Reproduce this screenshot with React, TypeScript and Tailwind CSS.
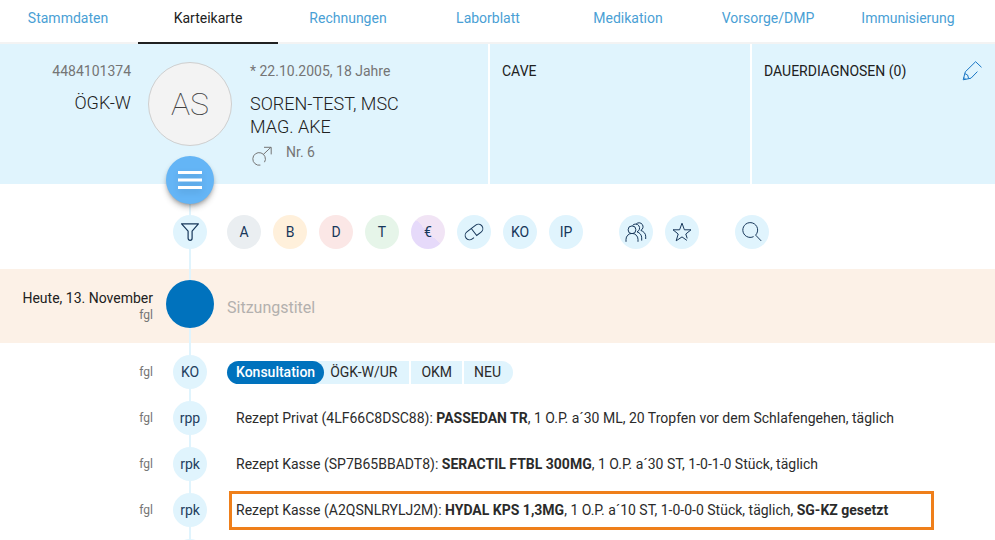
import React from "react";
import clsx from "clsx";

const tabs = [
  "Stammdaten",
  "Karteikarte",
  "Rechnungen",
  "Laborblatt",
  "Medikation",
  "Vorsorge/DMP",
  "Immunisierung",
];

const letterFilters = [
  { label: "A", className: "bg-[#eaeef1]" },
  { label: "B", className: "bg-[#fff0db]" },
  { label: "D", className: "bg-[#fbe7e6]" },
  { label: "T", className: "bg-[#e6f5e9]" },
  {
    label: "€",
    className: "bg-[linear-gradient(45deg,#e6dafa_50%,#f1e4f5_50%)]",
  },
];

const prescriptions = [
  {
    kind: "rpp",
    title: "Rezept Privat (4LF66C8DSC88): ",
    drug: "PASSEDAN TR",
    dosage: ", 1 O.P. a´30 ML, 20 Tropfen vor dem Schlafengehen, täglich",
  },
  {
    kind: "rpk",
    title: "Rezept Kasse (SP7B65BBADT8): ",
    drug: "SERACTIL FTBL 300MG",
    dosage: ", 1 O.P. a´30 ST, 1-0-1-0 Stück, täglich",
  },
  {
    kind: "rpk",
    title: "Rezept Kasse (A2QSNLRYLJ2M): ",
    drug: "HYDAL KPS 1,3MG",
    dosage: ", 1 O.P. a´10 ST, 1-0-0-0 Stück, täglich, ",
    note: "SG-KZ gesetzt",
    highlighted: true,
  },
];

interface IconProps {
  children: React.ReactNode;
  className?: string;
}

const Icon = ({ children, className }: IconProps) => (
  <svg
    viewBox="0 0 20 20"
    className={clsx("w-5 h-5", className)}
    fill="none"
    stroke="currentColor"
    strokeWidth="1"
    aria-hidden="true"
  >
    {children}
  </svg>
);

const FunnelIcon = () => (
  <Icon>
    <path
      d="M1.6 1.8H18.4L12.1 9.2V16.3a2 2 0 0 1-4 0V9.2Z"
      strokeWidth="1.2"
      strokeLinejoin="round"
    />
  </Icon>
);

const PillIcon = () => (
  <Icon>
    <g transform="rotate(-38 10 10)">
      <path d="M6.6 14.4H4.4a4.4 4.4 0 0 1 0-8.8H15.6a4.4 4.4 0 0 1 0 8.8H10V5.6" />
    </g>
  </Icon>
);

const PeopleIcon = () => (
  <svg
    viewBox="0 0 22 20"
    className="w-[22px] h-5"
    fill="none"
    stroke="currentColor"
    aria-hidden="true"
  >
    <circle cx="7" cy="7.8" r="3.9" />
    <path d="M1 19.8V17.4a6 6 0 0 1 12 0v2.4" />
    <path d="M7.6 3.4a4 4 0 1 1 4.4 6.4c2.9 1 4.7 3.2 4.7 6v2.8" />
    <path d="M11.2 2a4 4 0 1 1 4.6 6.4c2.8 1 4.9 3.2 4.9 5.8v2.8" />
  </svg>
);

const StarIcon = () => (
  <Icon>
    <path d="M14.9 18.4 10 14.9 4.2 18.8 6.2 12 1 7.8H7.6L10 1.2 12.4 7.8H19L13.8 12 15.2 16.4" />
  </Icon>
);

const SearchIcon = () => (
  <Icon>
    <path d="M11.6 14.6A7.4 7.4 0 1 1 13.6 13.1L19.2 18.9" />
  </Icon>
);

const PencilIcon = () => (
  <Icon>
    <path d="M19.5 6.3 13.6.7 3.3 10.8 1.2 18.8 9 17.2 15.4 10.6M2.9 12.6 5.6 14l1 3.4M1.9 16.4l1.6 1.8" />
  </Icon>
);

const MaleIcon = () => (
  <Icon>
    <path d="M8.4 19.1A6.3 6.3 0 1 1 12.5 16.2M11.2 8.6 19 1.2M12 1.3H19.2V8.4" />
  </Icon>
);

const MenuIcon = () => (
  <svg
    viewBox="0 0 24 18"
    className="w-6 h-[18px] drop-shadow-md"
    fill="currentColor"
    aria-hidden="true"
  >
    <path d="M0 0h24v3H0zM0 7.5h24v3H0zM0 15h24v3H0z" />
  </svg>
);

interface RoundButtonProps {
  label: string;
  className?: string;
  children?: React.ReactNode;
}

const RoundButton = ({ label, className, children }: RoundButtonProps) => (
  <button
    type="button"
    aria-label={label}
    className={clsx(
      "flex items-center justify-center shrink-0 w-[34px] h-[34px] rounded-full text-[#17375a]",
      className ?? "bg-[#e0f4fd]"
    )}
  >
    {children ?? label}
  </button>
);

interface TimelineRowProps {
  marker?: string;
  author?: string;
  children?: React.ReactNode;
}

const TimelineRow = ({ marker, author, children }: TimelineRowProps) => (
  <li className="flex items-center h-[46px] text-[#2b2b2b]">
    <span className="w-[153px] shrink-0 text-right text-xs text-[#757575]">{author}</span>
    <span className="relative z-10 mx-5 flex items-center justify-center shrink-0 w-[34px] h-[34px] rounded-full bg-[#e0f4fd] text-[#24405f]">
      {marker}
    </span>
    {children}
  </li>
);

const TabBar = () => (
  <nav className="flex -ml-0.5 border-b-2 border-[#f3f3f3]">
    {tabs.map((tab) => (
      <a
        key={tab}
        href="#"
        className={clsx(
          "w-[140px] h-11 -mb-0.5 pt-2 shrink-0 text-center border-b-2",
          tab === "Karteikarte"
            ? "text-[#212121] border-[#212121]"
            : "text-[#4a9fd5] border-transparent"
        )}
      >
        {tab}
      </a>
    ))}
  </nav>
);

const PatientHeader = () => (
  <header className="grid grid-cols-[488fr_260fr_243fr] gap-0.5">
    <section className="flex pt-[17px] bg-[#e0f4fd]">
      <div className="w-[131px] shrink-0 text-right">
        <p className="text-[#757575]">4484101374</p>
        <p className="mt-2.5 text-lg leading-[23px] font-light">ÖGK-W</p>
      </div>
      <div className="relative z-20 ml-[17px] mr-[18px] mt-px -mb-5 flex flex-col items-center gap-2.5 shrink-0">
        <div className="flex items-center justify-center w-[84px] h-[84px] rounded-full border border-[#cfcfcf] bg-[#f3f3f3] text-[32px] font-thin text-[#424242]">
          AS
        </div>
        <button
          type="button"
          aria-label="Menü"
          className="flex items-center justify-center w-12 h-12 rounded-full bg-[#64b5f6] text-white shadow-md shadow-black/30"
        >
          <MenuIcon />
        </button>
      </div>
      <div>
        <p className="text-[#757575]">* 22.10.2005, 18 Jahre</p>
        <h1 className="mt-[11px] text-lg leading-[23px] font-light">
          SOREN-TEST, MSC
          <br />
          MAG. AKE
        </h1>
        <p className="mt-1 flex gap-3.5 text-[#757575]">
          <span className="pt-1 pl-0.5">
            <MaleIcon />
          </span>
          Nr. 6
        </p>
      </div>
    </section>
    <section className="pt-[17px] pl-3 bg-[#e0f4fd]">
      <h2>CAVE</h2>
    </section>
    <section className="flex items-start justify-between pt-[17px] pl-3 pr-[13px] bg-[#e0f4fd]">
      <h2>DAUERDIAGNOSEN (0)</h2>
      <button type="button" aria-label="Dauerdiagnosen bearbeiten" className="text-[#1976c5]">
        <PencilIcon />
      </button>
    </section>
  </header>
);

const FilterBar = () => (
  <div className="relative z-10 flex pt-[31px] pb-5 pl-[173px]">
    <RoundButton label="Filter">
      <FunnelIcon />
    </RoundButton>
    <div className="ml-5 flex gap-9">
      <div className="flex gap-3">
        {letterFilters.map((filter) => (
          <RoundButton key={filter.label} {...filter} />
        ))}
        <RoundButton label="Medikamente">
          <PillIcon />
        </RoundButton>
        <RoundButton label="KO" />
        <RoundButton label="IP" />
      </div>
      <div className="flex gap-3">
        <RoundButton label="Benutzer">
          <PeopleIcon />
        </RoundButton>
        <RoundButton label="Favoriten">
          <StarIcon />
        </RoundButton>
      </div>
      <RoundButton label="Suche">
        <SearchIcon />
      </RoundButton>
    </div>
  </div>
);

const SessionRow = () => (
  <section className="flex pt-[11px] pb-[15px] bg-[#fcf1e7]">
    <div className="w-[153px] shrink-0 pt-2 text-right">
      <p>Heute, 13. November</p>
      <p className="text-xs leading-[14px] text-[#757575]">fgl</p>
    </div>
    <span className="relative z-10 mx-[13px] w-12 h-12 shrink-0 rounded-full bg-[#0072bd]" />
    <input
      type="text"
      aria-label="Sitzungstitel"
      placeholder="Sitzungstitel"
      className="flex-1 h-12 pt-1.5 text-base outline-none placeholder:text-[#b3b0ae]"
    />
  </section>
);

export default function App() {
  return (
    <div className="h-screen overflow-hidden bg-white font-['Roboto',sans-serif] text-sm leading-5 text-[#212121]">
      <TabBar />
      <PatientHeader />
      <main className="relative">
        {/* Timeline rail behind the round markers */}
        <div className="absolute inset-y-0 left-[189px] w-0.5 bg-[#e0f4fd]" />
        <FilterBar />
        <SessionRow />
        <ul className="pt-1.5">
          <TimelineRow marker="KO" author="fgl">
            <div className="flex gap-0.5 leading-[23px]">
              <div className="flex">
                <span className="relative z-10 px-[9px] rounded-full bg-[#0072bd] font-medium text-white">
                  Konsultation
                </span>
                <span className="-ml-3 pl-[18px] pr-3 bg-[#e0f4fd]">ÖGK-W/UR</span>
              </div>
              <span className="px-2.5 bg-[#e0f4fd]">OKM</span>
              <span className="pl-2.5 pr-3 rounded-r-full bg-[#e0f4fd]">NEU</span>
            </div>
          </TimelineRow>
          {prescriptions.map((item) => (
            <TimelineRow key={item.title} marker={item.kind} author="fgl">
              <p
                className={clsx(
                  item.highlighted
                    ? "ml-0.5 h-[39px] pl-1 pr-[43px] border-3 border-[#ef7f1a] leading-[33px]"
                    : "pl-[9px]"
                )}
              >
                {item.title}
                <b className="font-bold">{item.drug}</b>
                {item.dosage}
                {item.note && <b className="font-bold">{item.note}</b>}
              </p>
            </TimelineRow>
          ))}
          <TimelineRow />
        </ul>
      </main>
    </div>
  );
}
